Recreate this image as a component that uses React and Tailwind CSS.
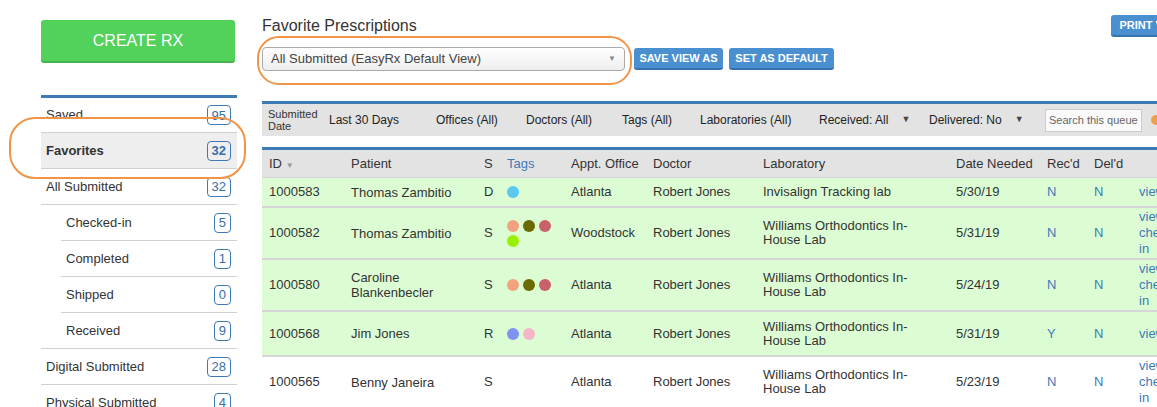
import React from 'react';

const sideItems = [
    { label: 'Saved', count: 95 },
    { label: 'Favorites', count: 32, active: true },
    { label: 'All Submitted', count: 32 },
];

const subItems = [
    { label: 'Checked-in', count: 5 },
    { label: 'Completed', count: 1 },
    { label: 'Shipped', count: 0 },
    { label: 'Received', count: 9 },
];

const moreItems = [
    { label: 'Digital Submitted', count: 28 },
    { label: 'Physical Submitted', count: 4 },
];

const LAB = 'Williams Orthodontics In-House Lab';

const rows = [
    { id: '1000583', patient: 'Thomas Zambitio', s: 'D', tags: ['#5cc8f0'], office: 'Atlanta', lab: 'Invisalign Tracking lab', date: '5/30/19', rec: 'N', del: 'N', action: 'view', green: true, h: 'h-[30px]' },
    { id: '1000582', patient: 'Thomas Zambitio', s: 'S', tags: ['#f2a27e', '#6b6a00', '#c9616a', '#99f000'], office: 'Woodstock', lab: LAB, date: '5/31/19', rec: 'N', del: 'N', action: 'view check-in', green: true, h: 'h-[52px]' },
    { id: '1000580', patient: 'Caroline Blankenbecler', s: 'S', tags: ['#f2a27e', '#6b6a00', '#c9616a'], office: 'Atlanta', lab: LAB, date: '5/24/19', rec: 'N', del: 'N', action: 'view check-in', green: true, h: 'h-[52px]' },
    { id: '1000568', patient: 'Jim Jones', s: 'R', tags: ['#7f93f0', '#f5b6c8'], office: 'Atlanta', lab: LAB, date: '5/31/19', rec: 'Y', del: 'N', action: 'view', green: true, h: 'h-[45px]' },
    { id: '1000565', patient: 'Benny Janeira', s: 'S', tags: [], office: 'Atlanta', lab: LAB, date: '5/23/19', rec: 'N', del: 'N', action: 'view check-in', green: false, h: 'h-[52px]' },
];

const cols = 'grid grid-cols-[82px_133px_23px_64px_82px_110px_193px_91px_47px_45px_60px]';

function Badge({ n, bold }) {
    return (
        <span className={`flex h-[20px] items-center rounded-[4px] border border-[#3d7ab6] px-[4px] text-[13px] leading-none text-[#3a6ea6] ${bold ? 'font-bold' : ''}`}>
            {n}
        </span>
    );
}

function Caret() {
    return <span className="ml-[13px] text-[9px] text-[#444]">▼</span>;
}

function BlueButton({ children, className = '' }) {
    return (
        <button className={`h-[22px] whitespace-nowrap rounded-[3px] border-b-2 border-[#3473ad] bg-[#4a8fd0] px-0 text-[11px] font-bold text-white ${className}`}>
            {children}
        </button>
    );
}

export default function App() {
    return (
        <div className="relative h-[407px] w-[1157px] overflow-hidden bg-white font-['Liberation_Sans',Arial,sans-serif] text-[13px] text-[#333]">
            <div className="flex">
                {/* sidebar */}
                <aside className="ml-[41px] w-[196px] shrink-0 pt-[20px]">
                    <button className="h-[43px] w-[194px] rounded-[3px] border-b-2 border-[#44b34c] bg-[#52d15b] text-[16px] text-white">
                        CREATE RX
                    </button>

                    <div className="mt-[32px] border-t-[3px] border-[#3d7ab6]">
                        {sideItems.map((item) => (
                            <div
                                key={item.label}
                                className={`flex items-center justify-between border-b border-[#cfcfcf] pl-[5px] pr-[6px] ${item.active ? 'bg-[#eeeeee] font-bold' : ''} ${item.label === 'Saved' ? 'h-[35px]' : 'h-[36px]'}`}
                            >
                                <span>{item.label}</span>
                                <Badge n={item.count} bold={item.active} />
                            </div>
                        ))}
                        <div className="border-b border-[#cfcfcf]">
                            {subItems.map((item, i) => (
                                <div
                                    key={item.label}
                                    className={`ml-[20px] flex items-center justify-between pl-[5px] pr-[6px] ${i < subItems.length - 1 ? 'h-[36px] border-b border-[#cfcfcf]' : 'h-[35px]'}`}
                                >
                                    <span>{item.label}</span>
                                    <Badge n={item.count} />
                                </div>
                            ))}
                        </div>
                        {moreItems.map((item) => (
                            <div key={item.label} className="flex h-[36px] items-center justify-between border-b border-[#cfcfcf] pl-[5px] pr-[6px]">
                                <span>{item.label}</span>
                                <Badge n={item.count} />
                            </div>
                        ))}
                    </div>
                </aside>

                {/* main */}
                <main className="ml-[25px] w-[930px] shrink-0 pt-[15px]">
                    <div className="flex h-[22px] items-center">
                        <h1 className="flex-1 text-[16px] leading-none text-[#333]">Favorite Prescriptions</h1>
                        <BlueButton className="w-[81px]">PRINT VIEW</BlueButton>
                    </div>

                    <div className="mt-[10px] flex h-[24px] items-center">
                        <div className="flex h-[24px] w-[363px] items-center justify-between rounded-[4px] border border-[#aaaaaa] bg-gradient-to-b from-white to-[#eeeeee] pl-[8px] pr-[8px]">
                            <span className="text-[13px] text-[#444]">All Submitted (EasyRx Default View)</span>
                            <span className="text-[8px] text-[#888]">▼</span>
                        </div>
                        <BlueButton className="ml-[9px] w-[89px]">SAVE VIEW AS</BlueButton>
                        <BlueButton className="ml-[6px] w-[105px]">SET AS DEFAULT</BlueButton>
                    </div>

                    {/* filter bar */}
                    <div className="mt-[30px] flex h-[35px] items-center whitespace-nowrap border-t-[3px] border-[#3d7ab6] bg-[#e3e3e3] pl-[6px] text-[12px] text-[#222]">
                        <span className="w-[61px] text-[11px] leading-[12px] text-[#333]">Submitted<br />Date</span>
                        <span className="w-[107px]">Last 30 Days</span>
                        <span className="w-[90px]">Offices (All)</span>
                        <span className="w-[96px]">Doctors (All)</span>
                        <span className="w-[78px]">Tags (All)</span>
                        <span className="w-[119px]">Laboratories (All)</span>
                        <span className="flex w-[110px] items-center">Received: All<Caret /></span>
                        <span className="flex w-[116px] items-center">Delivered: No<Caret /></span>
                        <div className="flex h-[23px] w-[97px] shrink-0 items-center overflow-hidden border border-[#cccccc] bg-[#fafafa] pl-[3px] text-[11px] text-[#666]">
                            Search this queue
                        </div>
                        <span className="ml-[9px] h-[10px] w-[10px] shrink-0 rounded-full bg-[#f0a04a]" />
                    </div>

                    {/* table */}
                    <div className="mt-[11px] border-t-[3px] border-[#3d7ab6]">
                        <div className={`${cols} h-[28px] items-center border-b border-[#d4d4d4] bg-[#e3e3e3] text-[13px]`}>
                            <div className="pl-[7px]">ID <span className="text-[8px] text-[#999]">▼</span></div>
                            <div className="pl-[7px]">Patient</div>
                            <div className="pl-[7px]">S</div>
                            <div className="pl-[7px] text-[#3d7ab8]">Tags</div>
                            <div className="pl-[7px]">Appt. Office</div>
                            <div className="pl-[7px]">Doctor</div>
                            <div className="pl-[7px]">Laboratory</div>
                            <div className="pl-[7px]">Date Needed</div>
                            <div className="pl-[7px]">Rec'd</div>
                            <div className="pl-[7px]">Del'd</div>
                            <div />
                        </div>

                        {rows.map((r) => (
                            <div
                                key={r.id}
                                className={`${cols} ${r.h} items-center border-b-2 border-[#d6d6d6] leading-[14px] ${r.green ? 'bg-[#dcfdd3]' : 'bg-white'}`}
                            >
                                <div className="pl-[7px]">{r.id}</div>
                                <div className="pl-[7px] pr-[6px] leading-[15px]">{r.patient}</div>
                                <div className="pl-[7px]">{r.s}</div>
                                <div className="flex flex-wrap gap-x-[4px] gap-y-[3px] pl-[7px]">
                                    {r.tags.map((c, i) => (
                                        <span key={i} className="h-[12px] w-[12px] rounded-full" style={{ backgroundColor: c }} />
                                    ))}
                                </div>
                                <div className="pl-[7px]">{r.office}</div>
                                <div className="pl-[7px]">Robert Jones</div>
                                <div className="pl-[7px] pr-[8px]">{r.lab}</div>
                                <div className="pl-[7px]">{r.date}</div>
                                <div className="pl-[7px] text-[#3d7ab8]">{r.rec}</div>
                                <div className="pl-[7px] text-[#3d7ab8]">{r.del}</div>
                                <div className="pl-[7px] pr-[7px] leading-[16px] text-[#3d7ab8]">{r.action}</div>
                            </div>
                        ))}
                    </div>
                </main>
            </div>

            {/* orange annotation outlines */}
            <div className="absolute left-[9px] top-[117px] h-[62px] w-[237px] rounded-[26px] border-[2.5px] border-[#f29447]" />
            <div className="absolute left-[257px] top-[36px] h-[49px] w-[375px] rounded-[22px] border-[2.5px] border-[#f29447]" />
        </div>
    );
}
